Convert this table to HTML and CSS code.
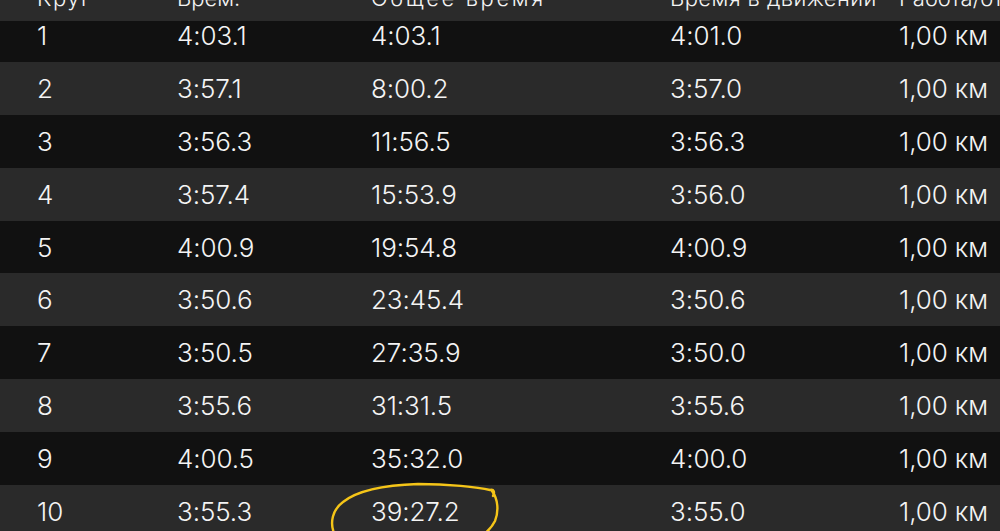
FILE: index.html
```html
<!DOCTYPE html>
<html lang="ru">
<head>
<meta charset="utf-8">
<link rel="stylesheet" href="styles.css">
</head>
<body>
<div class="screen">
  <div class="table">
    <div class="row odd"><span>1</span><span>4:03.1</span><span>4:03.1</span><span>4:01.0</span><span>1,00 км</span></div>
    <div class="row even"><span>2</span><span>3:57.1</span><span>8:00.2</span><span>3:57.0</span><span>1,00 км</span></div>
    <div class="row odd"><span>3</span><span>3:56.3</span><span>11:56.5</span><span>3:56.3</span><span>1,00 км</span></div>
    <div class="row even"><span>4</span><span>3:57.4</span><span>15:53.9</span><span>3:56.0</span><span>1,00 км</span></div>
    <div class="row odd"><span>5</span><span>4:00.9</span><span>19:54.8</span><span>4:00.9</span><span>1,00 км</span></div>
    <div class="row even"><span>6</span><span>3:50.6</span><span>23:45.4</span><span>3:50.6</span><span>1,00 км</span></div>
    <div class="row odd"><span>7</span><span>3:50.5</span><span>27:35.9</span><span>3:50.0</span><span>1,00 км</span></div>
    <div class="row even"><span>8</span><span>3:55.6</span><span>31:31.5</span><span>3:55.6</span><span>1,00 км</span></div>
    <div class="row odd"><span>9</span><span>4:00.5</span><span>35:32.0</span><span>4:00.0</span><span>1,00 км</span></div>
    <div class="row even"><span>10</span><span>3:55.3</span><span>39:27.2</span><span>3:55.0</span><span>1,00 км</span></div>
  </div>
  <div class="header">
    <div class="head-row"><span class="h-lap">Круг</span><span>Врем.</span><span class="h-total">Общее время</span><span class="h-moving">Время в движении</span><span>Работа/отдых</span></div>
  </div>
  <svg class="mark" width="200" height="60" viewBox="0 0 200 60">
    <path d="M165 19 C167 15 166 12 162 13 C150 10 120 7 90 7 C60 8 30 13 15 25 C4 33 2 46 6 56 C10 62 20 64 30 66" fill="none" stroke="#f5c518" stroke-width="2.4" stroke-linecap="round"/>
    <path d="M164 14 C170 22 171 34 167 44 C163 52 156 58 148 62" fill="none" stroke="#f5c518" stroke-width="2.4" stroke-linecap="round"/>
  </svg>
</div>
</body>
</html>
```

FILE: styles.css
```css
html, body {
  margin: 0;
  padding: 0;
  background: #111111;
}
.screen {
  position: relative;
  width: 1000px;
  height: 531px;
  overflow: hidden;
  font-family: Inter, "Noto Sans", "DejaVu Sans", sans-serif;
  font-weight: 300;
  color: #f4f4f4;
}
.table {
  padding-top: 9px;
}
.row, .head-row {
  display: grid;
  grid-template-columns: 140px 194px 299px 229px 1fr;
  padding-left: 37px;
  align-items: center;
  white-space: nowrap;
}
.row {
  height: 52.9px;
  font-size: 26px;
  letter-spacing: -0.1px;
}
.odd { background: #111111; }
.even { background: #2a2a2a; }
.header {
  position: absolute;
  top: 0;
  left: 0;
  right: 0;
  height: 21px;
  background: #2b2b2b;
  overflow: hidden;
}
.head-row {
  font-size: 22px;
  line-height: 26px;
  margin-top: -15px;
}
.h-lap { letter-spacing: 1.5px; }
.h-total { letter-spacing: 2.6px; }
.h-moving { letter-spacing: 0.4px; }
.mark {
  position: absolute;
  left: 328px;
  top: 477px;
}
```
